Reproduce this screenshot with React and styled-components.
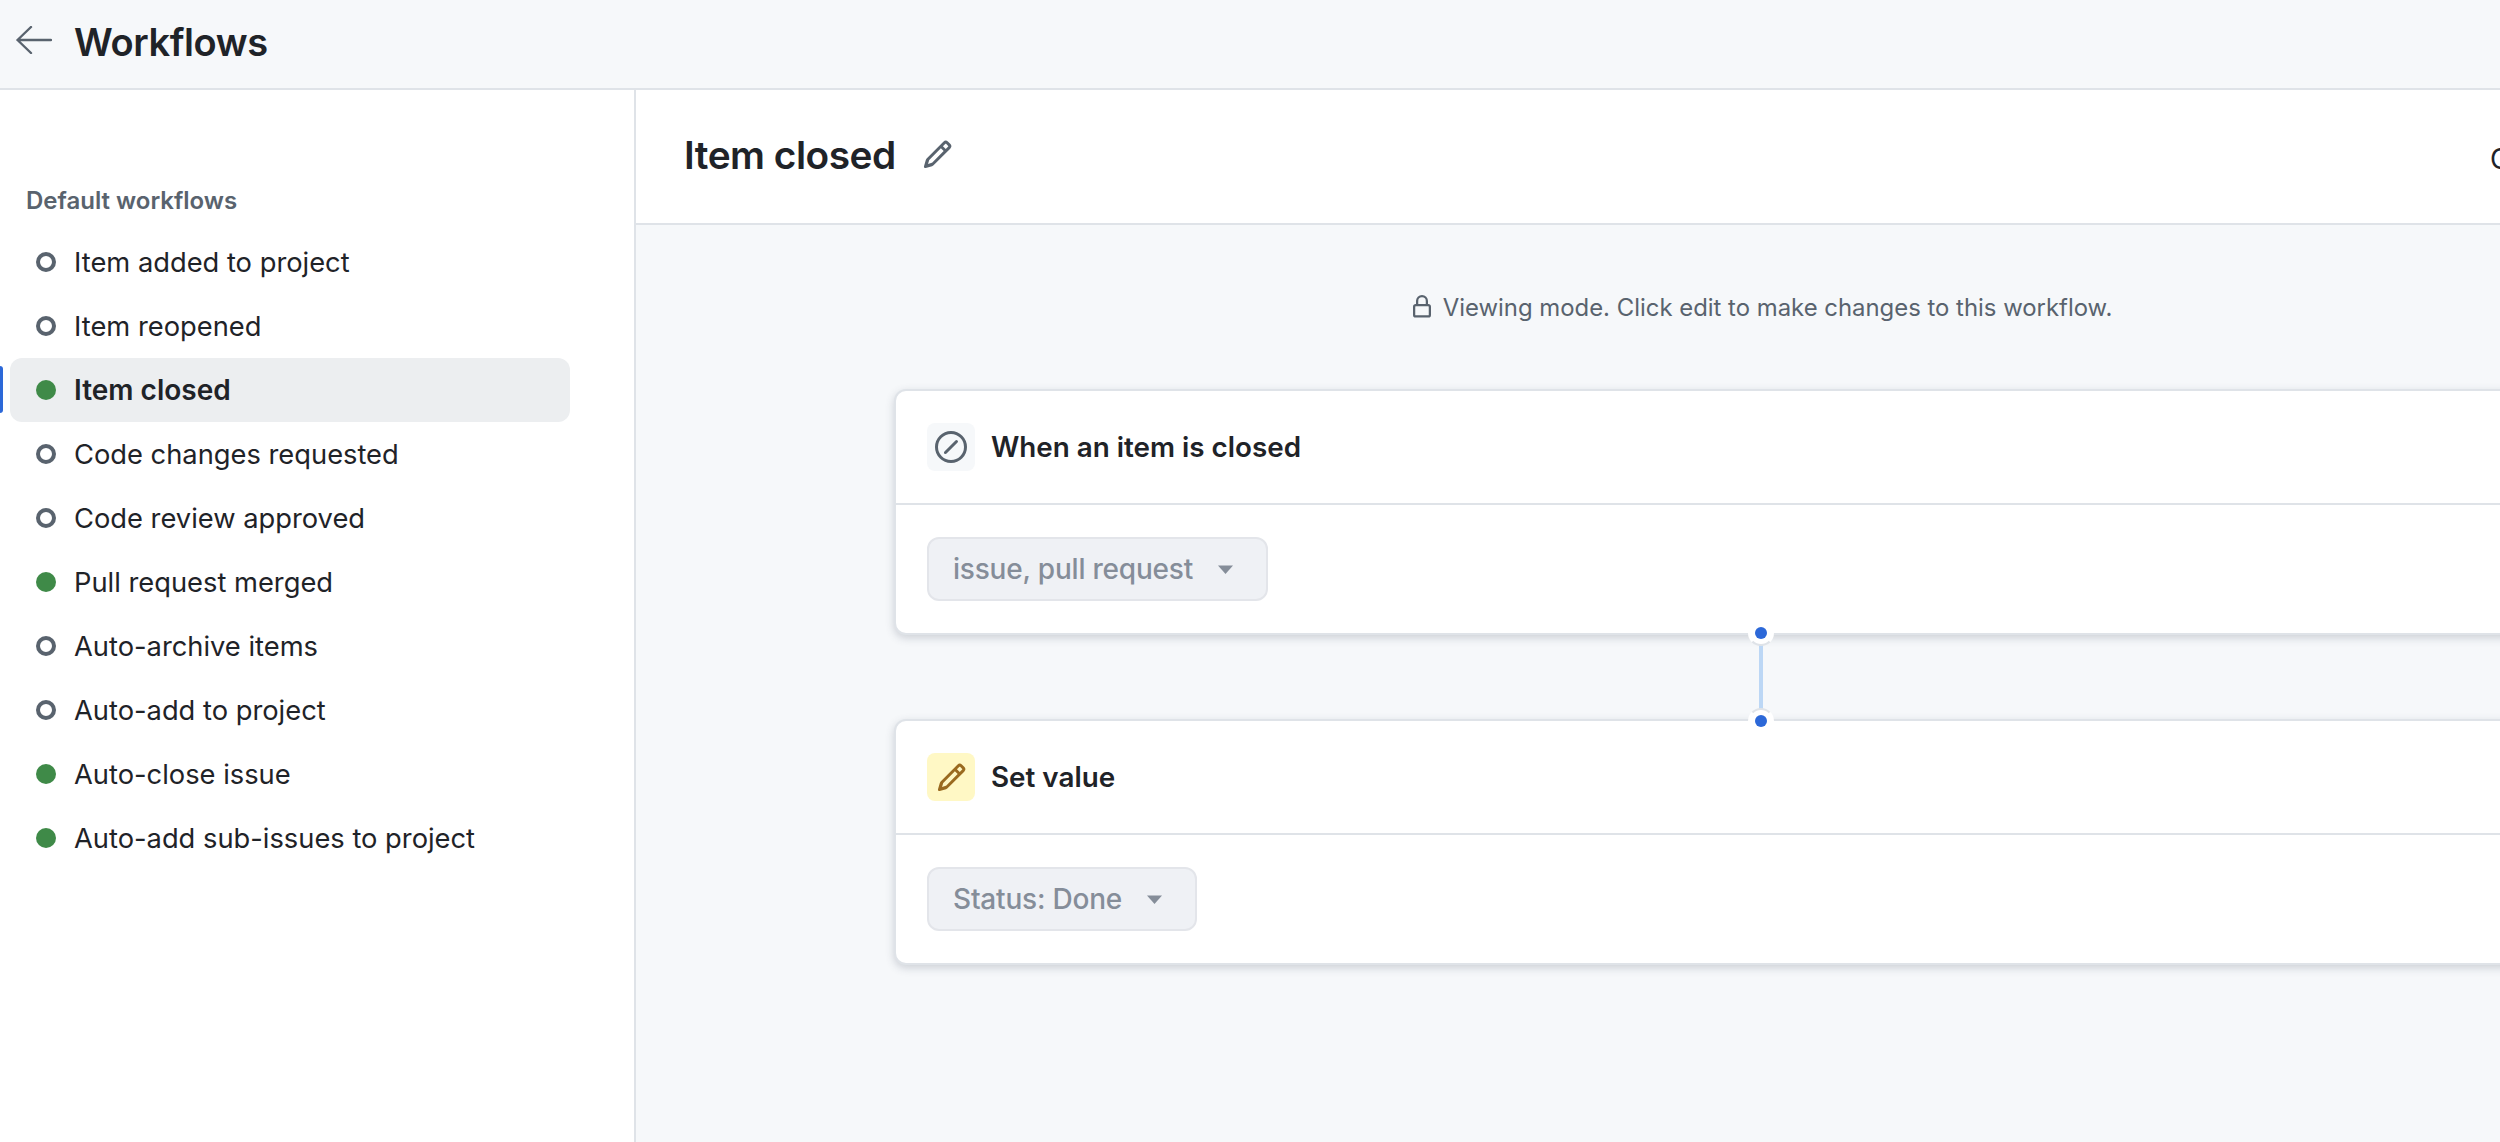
import React from "react";
import styled, { createGlobalStyle } from "styled-components";

const workflows = [
  { name: "Item added to project", on: false },
  { name: "Item reopened", on: false },
  { name: "Item closed", on: true, active: true },
  { name: "Code changes requested", on: false },
  { name: "Code review approved", on: false },
  { name: "Pull request merged", on: true },
  { name: "Auto-archive items", on: false },
  { name: "Auto-add to project", on: false },
  { name: "Auto-close issue", on: true },
  { name: "Auto-add sub-issues to project", on: true },
];

const PencilIcon = ({ size = 24, color = "#59636e" }) => (
  <svg width={size} height={size} viewBox="0 0 16 16" fill={color}>
    <path d="M11.013 1.427a1.75 1.75 0 0 1 2.474 0l1.086 1.086a1.75 1.75 0 0 1 0 2.474l-8.61 8.61c-.21.21-.47.364-.756.445l-3.251.93a.75.75 0 0 1-.927-.928l.929-3.25c.081-.286.235-.547.445-.758l8.61-8.61Zm.176 4.823L9.75 4.81l-6 6a.249.249 0 0 0-.064.108l-.558 1.953 1.953-.558a.253.253 0 0 0 .108-.064Zm1.238-3.763a.25.25 0 0 0-.354 0L10.811 3.75l1.439 1.44 1.263-1.263a.25.25 0 0 0 0-.354Z" />
  </svg>
);

const SkipIcon = () => (
  <svg width="32" height="32" viewBox="0 0 16 16" fill="#59636e">
    <path d="M8 0a8 8 0 1 1 0 16A8 8 0 0 1 8 0ZM1.5 8a6.5 6.5 0 1 0 13 0 6.5 6.5 0 0 0-13 0Zm9.78-2.22-5.5 5.5a.749.749 0 0 1-1.275-.326.749.749 0 0 1 .215-.734l5.5-5.5a.751.751 0 0 1 1.042.018.751.751 0 0 1 .018 1.042Z" />
  </svg>
);

const LockIcon = () => (
  <svg width="24" height="24" viewBox="0 0 16 16" fill="#59636e">
    <path d="M4 4a4 4 0 0 1 8 0v2h.25c.966 0 1.75.784 1.75 1.75v5.5A1.75 1.75 0 0 1 12.25 15h-8.5A1.75 1.75 0 0 1 2 13.25v-5.5C2 6.784 2.784 6 3.75 6H4Zm8.25 3.5h-8.5a.25.25 0 0 0-.25.25v5.5c0 .138.112.25.25.25h8.5a.25.25 0 0 0 .25-.25v-5.5a.25.25 0 0 0-.25-.25ZM10.5 6V4a2.5 2.5 0 1 0-5 0v2Z" />
  </svg>
);

const BackArrow = () => (
  <svg width="36" height="28" viewBox="0 0 36 28" fill="none" stroke="#59636e" strokeWidth="2.4" strokeLinecap="round" strokeLinejoin="round">
    <path d="M1.5 14H35M15 1 1.5 14 15 27" />
  </svg>
);

const Caret = () => (
  <svg width="15" height="9" viewBox="0 0 15 9" fill="#858d99">
    <path d="M0 0.5h15L7.5 9Z" />
  </svg>
);

export default function App() {
  return (
    <Page>
      <GlobalStyle />
      <TopBar>
        <BackButton>
          <BackArrow />
        </BackButton>
        <PageTitle>Workflows</PageTitle>
      </TopBar>
      <Body>
        <Sidebar>
          <SideHeading>Default workflows</SideHeading>
          <NavList>
            {workflows.map((w) => (
              <NavRow key={w.name} $active={w.active}>
                <Dot $on={w.on} />
                {w.name}
              </NavRow>
            ))}
          </NavList>
        </Sidebar>
        <Main>
          <TitleBar>
            <TitleGroup>
              <WorkflowTitle>Item closed</WorkflowTitle>
              <PencilIcon size={31} />
            </TitleGroup>
            <CutAction>Close</CutAction>
          </TitleBar>
          <Canvas>
            <Flow>
              <Notice>
                <LockIcon />
                Viewing mode. Click edit to make changes to this workflow.
              </Notice>
              <Card>
                <CardHead>
                  <IconTile>
                    <SkipIcon />
                  </IconTile>
                  <CardTitle>When an item is closed</CardTitle>
                </CardHead>
                <CardBody>
                  <FakeSelect>
                    issue, pull request
                    <Caret />
                  </FakeSelect>
                </CardBody>
              </Card>
              <Connector>
                <Pin $top />
                <Pin />
              </Connector>
              <Card>
                <CardHead>
                  <IconTile $yellow>
                    <PencilIcon size={31} color="#9a6a1f" />
                  </IconTile>
                  <CardTitle>Set value</CardTitle>
                </CardHead>
                <CardBody>
                  <FakeSelect>
                    Status: Done
                    <Caret />
                  </FakeSelect>
                </CardBody>
              </Card>
            </Flow>
          </Canvas>
        </Main>
      </Body>
    </Page>
  );
}

const GlobalStyle = createGlobalStyle`
  html, body {
    margin: 0;
    padding: 0;
    height: 100%;
    overflow: hidden;
    background: #fff;
  }
  body {
    font-family: Inter, "Liberation Sans", sans-serif;
    color: #1f2328;
  }
`;

const Page = styled.div`
  width: 2500px;
  height: 1142px;
  display: flex;
  flex-direction: column;
  overflow: hidden;
`;

const TopBar = styled.header`
  height: 90px;
  box-sizing: border-box;
  flex: none;
  display: flex;
  align-items: center;
  gap: 22px;
  padding-left: 16px;
  background: #f6f8fa;
  border-bottom: 2px solid #dfe3e8;
`;

const BackButton = styled.div`
  width: 36px;
  height: 28px;
  display: flex;
  margin-top: -8px;
`;

const PageTitle = styled.h1`
  margin: -5px 0 0;
  font-size: 38px;
  line-height: 44px;
  font-weight: 600;
  letter-spacing: -0.4px;
  color: #1f2328;
`;

const Body = styled.div`
  flex: 1;
  display: flex;
  min-height: 0;
`;

const Sidebar = styled.aside`
  width: 634px;
  flex: none;
  padding-top: 95px;
  border-right: 2px solid #dfe3e8;
  background: #fff;
`;

const SideHeading = styled.div`
  padding-left: 26px;
  font-size: 24px;
  line-height: 32px;
  font-weight: 600;
  color: #59636e;
`;

const NavList = styled.nav`
  margin-top: 13px;
  display: flex;
  flex-direction: column;
`;

const NavRow = styled.div`
  position: relative;
  width: 560px;
  height: 64px;
  margin-left: 10px;
  display: flex;
  align-items: center;
  gap: 18px;
  padding-left: 26px;
  box-sizing: border-box;
  border-radius: 12px;
  font-size: ${(p) => (p.$active ? "28px" : "27.3px")};
  font-weight: ${(p) => (p.$active ? 600 : 400)};
  color: #1f2328;
  background: ${(p) => (p.$active ? "#eceef0" : "transparent")};
  &::before {
    content: ${(p) => (p.$active ? '""' : "none")};
    position: absolute;
    left: -10px;
    top: 8px;
    width: 3px;
    height: 47px;
    border-radius: 0 4px 4px 0;
    background: #2c68d8;
  }
`;

const Dot = styled.span`
  width: 20px;
  height: 20px;
  flex: none;
  box-sizing: border-box;
  border-radius: 50%;
  background: ${(p) => (p.$on ? "#3f8a48" : "transparent")};
  border: ${(p) => (p.$on ? "none" : "4px solid #59636e")};
`;

const Main = styled.main`
  flex: 1;
  min-width: 0;
  display: flex;
  flex-direction: column;
`;

const TitleBar = styled.div`
  height: 135px;
  box-sizing: border-box;
  flex: none;
  display: flex;
  align-items: center;
  justify-content: space-between;
  padding: 0 0 4px 48px;
  background: #fff;
  border-bottom: 2px solid #dfe3e8;
  overflow: hidden;
`;

const TitleGroup = styled.div`
  display: flex;
  align-items: center;
  gap: 26px;
`;

const WorkflowTitle = styled.h2`
  margin: 0;
  font-size: 38.8px;
  line-height: 50px;
  font-weight: 600;
  letter-spacing: -0.5px;
  color: #1f2328;
`;

const CutAction = styled.span`
  flex: none;
  width: 10px;
  margin-top: 8px;
  overflow: hidden;
  font-size: 28px;
  color: #1f2328;
`;

const Canvas = styled.div`
  flex: 1;
  min-height: 0;
  background: #f6f8fa;
  padding-left: 258px;
  overflow: hidden;
`;

const Flow = styled.div`
  width: 1734px;
  display: flex;
  flex-direction: column;
  align-items: center;
`;

const Notice = styled.div`
  height: 32px;
  margin: 66px 0 66px;
  display: flex;
  align-items: center;
  gap: 9px;
  font-size: 23.9px;
  color: #59636e;
  white-space: nowrap;
`;

const Card = styled.section`
  width: 100%;
  box-sizing: border-box;
  background: #fff;
  border: 2px solid #dfe3e8;
  border-radius: 12px;
  box-shadow: 0 3px 8px rgba(60, 70, 90, 0.22);
`;

const CardHead = styled.div`
  height: 112px;
  display: flex;
  align-items: center;
  gap: 16px;
  padding-left: 31px;
  border-bottom: 2px solid #dfe3e8;
`;

const IconTile = styled.div`
  width: 48px;
  height: 48px;
  display: flex;
  align-items: center;
  justify-content: center;
  border-radius: 8px;
  background: ${(p) => (p.$yellow ? "#fff8c5" : "#f6f8fa")};
`;

const CardTitle = styled.h3`
  margin: 0;
  font-size: 27.8px;
  font-weight: 600;
  color: #1f2328;
`;

const CardBody = styled.div`
  height: 128px;
  display: flex;
  align-items: center;
  padding-left: 31px;
`;

const FakeSelect = styled.div`
  height: 64px;
  display: flex;
  align-items: center;
  gap: 25px;
  padding: 0 33px 0 24px;
  box-sizing: border-box;
  border: 2px solid #e3e5ea;
  border-radius: 12px;
  background: #eff1f5;
  font-size: 28px;
  font-weight: 500;
  letter-spacing: -0.2px;
  color: #858d99;
`;

const Connector = styled.div`
  position: relative;
  z-index: 1;
  width: 4px;
  height: 84px;
  background: #bcd7f5;
`;

const Pin = styled.span`
  position: absolute;
  left: 50%;
  top: ${(p) => (p.$top ? "-2px" : "calc(100% + 2px)")};
  width: 26px;
  height: 26px;
  box-sizing: border-box;
  transform: translate(-50%, -50%);
  border-radius: 50%;
  background: #fff;
  border: 2px solid transparent;
  border-${(p) => (p.$top ? "bottom" : "top")}-color: #dfe3e8;
  &::after {
    content: "";
    position: absolute;
    left: 5px;
    top: 5px;
    width: 12px;
    height: 12px;
    border-radius: 50%;
    background: #2c68d8;
  }
`;
